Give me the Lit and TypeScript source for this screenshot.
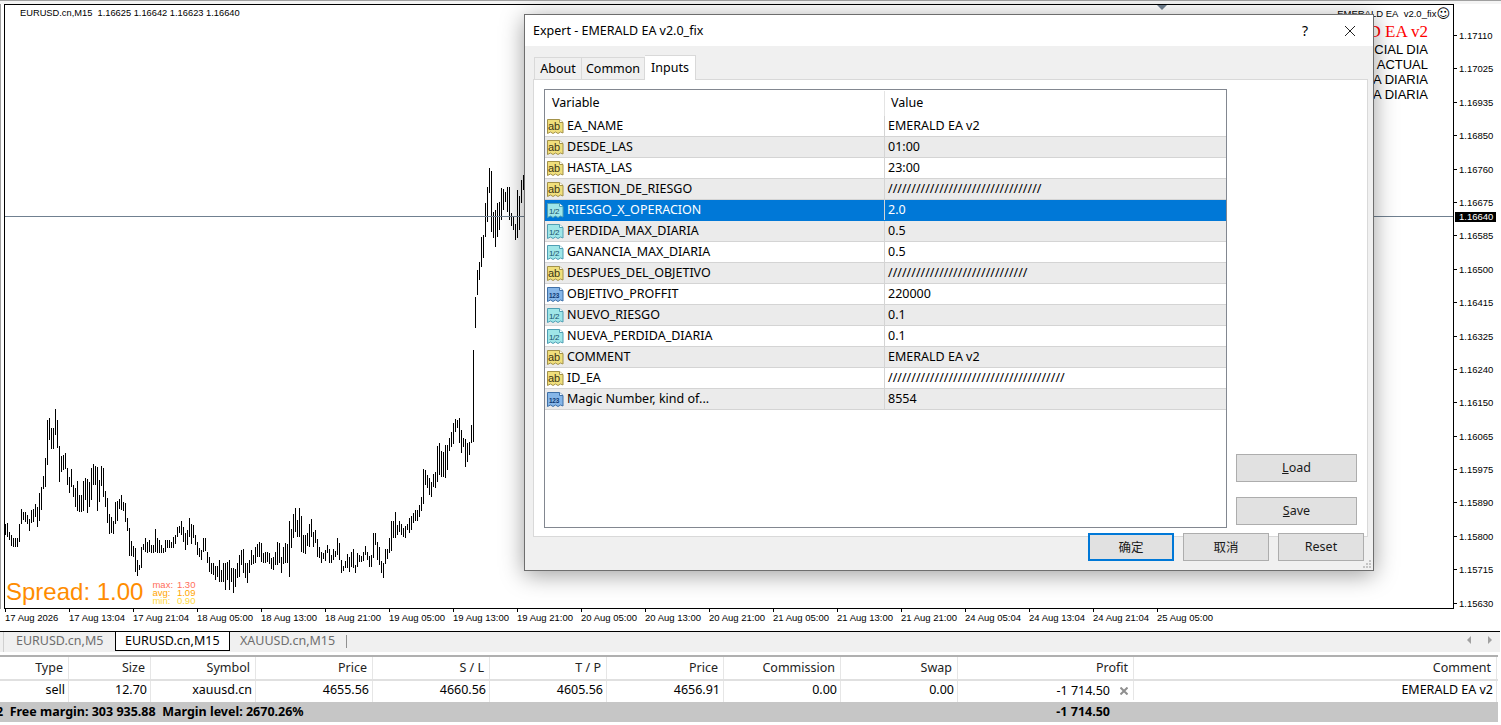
import { LitElement, css, html, svg } from "lit";
import { customElement } from "lit/decorators.js";

type Kind = "ab" | "half" | "num";

const INPUTS: [Kind, string, string][] = [
  ["ab", "EA_NAME", "EMERALD EA v2"],
  ["ab", "DESDE_LAS", "01:00"],
  ["ab", "HASTA_LAS", "23:00"],
  ["ab", "GESTION_DE_RIESGO", "/".repeat(33)],
  ["half", "RIESGO_X_OPERACION", "2.0"],
  ["half", "PERDIDA_MAX_DIARIA", "0.5"],
  ["half", "GANANCIA_MAX_DIARIA", "0.5"],
  ["ab", "DESPUES_DEL_OBJETIVO", "/".repeat(30)],
  ["num", "OBJETIVO_PROFFIT", "220000"],
  ["half", "NUEVO_RIESGO", "0.1"],
  ["half", "NUEVA_PERDIDA_DIARIA", "0.1"],
  ["ab", "COMMENT", "EMERALD EA v2"],
  ["ab", "ID_EA", "/".repeat(38)],
  ["num", "Magic Number, kind of...", "8554"],
];

const ICON_COLORS: Record<Kind, { fill: string; edge: string; ink: string; label: string }> = {
  ab: { fill: "#f0df7c", edge: "#a3924a", ink: "#3c3614", label: "ab" },
  half: { fill: "#9fe6e8", edge: "#4f9fb4", ink: "#14506a", label: "1/2" },
  num: { fill: "#86b6e8", edge: "#3f70a8", ink: "#0f3a74", label: "123" },
};

const PRICES = [
  "1.17110", "1.17025", "1.16935", "1.16850", "1.16760", "1.16675",
  "1.16585", "1.16500", "1.16415", "1.16325", "1.16240", "1.16150",
  "1.16065", "1.15975", "1.15890", "1.15800", "1.15715", "1.15630",
];

const TIMES = [
  "17 Aug 2026", "17 Aug 13:04", "17 Aug 21:04", "18 Aug 05:00", "18 Aug 13:00",
  "18 Aug 21:00", "19 Aug 05:00", "19 Aug 13:00", "19 Aug 21:00", "20 Aug 05:00",
  "20 Aug 13:00", "20 Aug 21:00", "21 Aug 05:00", "21 Aug 13:00", "21 Aug 21:00",
  "24 Aug 05:04", "24 Aug 13:04", "24 Aug 21:04", "25 Aug 05:00",
];

const HEADERS = ["Type", "Size", "Symbol", "Price", "S / L", "T / P", "Price", "Commission", "Swap", "Profit", "Comment"];
const ORDER = ["sell", "12.70", "xauusd.cn", "4655.56", "4660.56", "4605.56", "4656.91", "0.00", "0.00"];

// bar tops and bottoms, read off 3x crops: y = 400 + v / 3, one bar every 2px from x = 5
const BARS_A = [
  372,405, 370,412, 395,420, 405,438, 415,440, 415,440, 413,440, 373,425, 328,372, 335,360,
  337,365, 345,372, 358,392, 330,368, 327,365, 313,352, 322,380, 280,362, 260,330, 228,268,
  175,262, 60,195, 55,120, 85,147, 85,147, 28,105, 60,145, 138,245, 168,215, 165,210,
  160,208, 205,255, 230,278, 208,260, 255,292, 265,320, 243,332, 285,335, 285,335, 242,332,
  235,300, 238,338, 245,320, 205,300, 192,255, 198,255, 200,332, 240,305, 198,258, 205,292,
  272,320, 295,370, 342,402, 350,398, 362,402, 305,372, 302,362, 298,328, 285,330, 305,332,
  308,365, 355,392, 385,467, 422,467, 437,470, 445,515, 480,527, 495,510, 440,505, 432,450,
  415,457, 425,458, 420,455, 435,458, 435,458, 388,455, 415,458, 420,458, 435,458, 445,458,
  420,455, 420,445, 420,445, 425,445, 410,445, 405,432, 380,410, 378,400, 362,405, 380,425,
  400,450, 390,435, 355,410, 372,432, 375,415, 405,435, 425,465, 445,470, 450,480, 415,455,
  415,452, 455,490, 470,515, 488,522, 490,525, 498,540, 498,532, 480,545, 510,545, 490,545,
  490,570, 485,540, 480,570, 505,545, 505,578, 508,562, 490,535, 465,530, 450,495, 448,518,
  490,535, 488,548, 480,520, 450,495, 465,492, 440,490, 432,470, 425,470,
  430,485, 460,490, 456,488, 456,485, 460,492, 475,507, 470,510, 455,495, 427,495, 430,490,
  470,518, 440,492, 428,490, 432,490, 362,530, 388,445, 342,415, 325,397, 360,412, 325,410,
  348,455, 405,460, 405,462, 400,438, 372,440, 358,412, 395,440, 390,430, 418,472, 442,475,
  455,488, 458,478, 450,482, 436,458, 448,488, 465,490, 448,480, 452,470, 415,465, 428,480,
  480,520, 498,512, 483,505, 462,505, 470,515, 456,500, 448,505, 495,518, 460,502, 465,485,
  468,485, 456,482, 438,465, 455,480, 468,500, 465,500, 400,475, 400,435, 425,480, 440,495,
  482,520, 490,535, 447,492, 448,478, 415,460, 362,452, 362,415, 337,415, 375,405, 362,395,
  372,405, 385,410, 378,415, 372,390, 355,398, 348,390, 340,370, 330,362, 330,362, 315,352,
  290,332, 208,312, 210,255, 225,265, 235,285, 245,290, 222,262, 215,265, 138,245, 130,225,
  152,230, 155,232, 135,235, 135,210, 115,152, 97,140, 70,132, 57,95, 60,85, 55,128,
  90,160, 115,140, 118,200, 130,185, 125,165, 75,128, -150,125,
];

// the steep part above y = 400, same order, already in page pixels, from x = 475
const BARS_B = [
  297,328, 270,295, 262,280, 237,267, 235,258, 203,237, 187,222, 168,193, 171,232, 212,238,
  210,247, 203,237, 202,230, 188,220, 189,210, 192,202, 187,212, 187,220, 213,226, 216,230,
  224,240, 190,238, 196,230, 180,203, 175,190,
];

function barsPath(): string {
  let d = "";
  for (let i = 0; i < BARS_A.length; i += 2) {
    const x = 5 + i + 0.5;
    d += `M${x} ${Math.round(400 + BARS_A[i] / 3)}V${Math.round(400 + BARS_A[i + 1] / 3)}`;
  }
  for (let i = 0; i < BARS_B.length; i += 2) {
    const x = 475 + i + 0.5;
    d += `M${x} ${BARS_B[i]}V${BARS_B[i + 1]}`;
  }
  return d;
}

function typeIcon(kind: Kind) {
  const c = ICON_COLORS[kind];
  const size = kind === "num" ? 6.5 : kind === "half" ? 8 : 11;
  return html`<svg class="type-icon" width="17" height="17" viewBox="0 0 17 17">
    <path d="M0.5 1.5H12.5L16 4.5V15L13.5 14 11 15.5 8.5 14 6 15.5 3.5 14 0.5 15.5Z"
      fill=${c.fill} stroke=${c.edge} />
    <path d="M12.5 1.5V4.5H16" fill="#fff" stroke=${c.edge} />
    ${svg`<text x="7" y="11.5" text-anchor="middle" font-family="Liberation Sans, sans-serif"
      font-size=${size} font-weight=${kind === "num" ? 700 : 400} letter-spacing=${kind === "ab" ? 0 : -0.3}
      fill=${c.ink}>${c.label}</text>`}
  </svg>`;
}

@customElement("app-root")
export class AppRoot extends LitElement {
  private renderChart() {
    return html`
      <div class="chart-row">
        <div class="plot">
          <svg class="bars" width="1448" height="603" viewBox="5 5 1448 603">
            <path d=${barsPath()} stroke="#000" stroke-width="1" fill="none" shape-rendering="crispEdges" />
            <path d="M5 216.5H1453" stroke="#708090" stroke-width="1" shape-rendering="crispEdges" />
            <path d="M1157 5H1167L1162 10Z" fill="#708090" />
          </svg>
          <div class="quote">EURUSD.cn,M15&nbsp; 1.16625 1.16642 1.16623 1.16640</div>
          <div class="ea-panel">
            <div class="ea-title">EMERALD EA&nbsp; v2.0_fix<span class="smiley">☺</span></div>
            <div class="ea-name">EMERALD EA v2</div>
            <div class="ea-line">BALANCE INICIAL DIA</div>
            <div class="ea-line">BALANCE ACTUAL</div>
            <div class="ea-line">PERDIDA DIARIA</div>
            <div class="ea-line">GANANCIA DIARIA</div>
          </div>
          <div class="spread">
            <span class="spread-main">Spread: 1.00</span>
            <div class="spread-stats">
              <div class="stat max"><span>max:</span><span>1.30</span></div>
              <div class="stat avg"><span>avg:</span><span>1.09</span></div>
              <div class="stat min"><span>min:</span><span>0.90</span></div>
            </div>
          </div>
        </div>
        <div class="price-axis">
          ${PRICES.map((p) => html`<div class="price">${p}</div>`)}
          <div class="price-now">1.16640</div>
        </div>
      </div>
      <div class="time-axis">
        ${TIMES.map((t) => html`<div class="time">${t}</div>`)}
      </div>
    `;
  }

  private renderTabs() {
    return html`
      <div class="chart-tabs">
        <div class="chart-tab first">EURUSD.cn,M5</div>
        <div class="chart-tab active">EURUSD.cn,M15</div>
        <div class="chart-tab last">XAUUSD.cn,M15</div>
        <div class="tab-arrows">
          <svg width="30" height="10" viewBox="0 0 30 10">
            <path d="M5 1V9L1 5Z" fill="#a0a0a0" />
            <path d="M22 1V9L26 5Z" fill="#a0a0a0" />
          </svg>
        </div>
      </div>
    `;
  }

  private renderTrades() {
    return html`
      <div class="trades">
        <div class="grid head">
          ${HEADERS.map((h) => html`<div class="cell">${h}</div>`)}
        </div>
        <div class="grid order">
          ${ORDER.map((v) => html`<div class="cell">${v}</div>`)}
          <div class="cell profit">
            <span>-1 714.50</span>
            <svg width="8" height="8" viewBox="0 0 8 8">
              <path d="M0.5 0.5L7.5 7.5M7.5 0.5L0.5 7.5" stroke="#8f8f8f" stroke-width="2" fill="none" />
            </svg>
          </div>
          <div class="cell">EMERALD EA v2</div>
        </div>
        <div class="grid status">
          <div class="status-left"><span class="cut">2</span>&nbsp; Free margin: 303 935.88&nbsp; Margin level: 2670.26%</div>
          <div class="status-profit">-1 714.50</div>
        </div>
      </div>
    `;
  }

  private renderDialog() {
    return html`
      <div class="dialog">
        <div class="title-bar">
          <span class="title">Expert - EMERALD EA v2.0_fix</span>
          <span class="help">?</span>
          <svg class="close" width="12" height="12" viewBox="0 0 12 12">
            <path d="M1 1L11 11M11 1L1 11" stroke="#222" stroke-width="1" fill="none" />
          </svg>
        </div>
        <div class="dialog-body">
          <div class="dlg-tabs">
            <div class="dlg-tab about">About</div>
            <div class="dlg-tab common">Common</div>
            <div class="dlg-tab on">Inputs</div>
          </div>
          <div class="panel">
            <div class="list">
              <div class="list-head">
                <div class="col-var">Variable</div>
                <div class="col-val">Value</div>
              </div>
              ${INPUTS.map(([kind, name, value], i) => html`
                <div class="list-row ${i === 4 ? "sel" : i % 2 === 1 || i === 5 ? "alt" : ""}">
                  <div class="col-name">${typeIcon(kind)}<span>${name}</span></div>
                  <div class="col-value">${value}</div>
                </div>
              `)}
            </div>
            <div class="side-btns">
              <button class="btn side"><u>L</u>oad</button>
              <button class="btn side"><u>S</u>ave</button>
            </div>
          </div>
          <div class="dlg-btns">
            <button class="btn main default">确定</button>
            <button class="btn main">取消</button>
            <button class="btn main">Reset</button>
          </div>
        </div>
        <svg class="grip" width="10" height="10" viewBox="0 0 10 10">
          <path d="M7 1h2v2h-2zM4 4h2v2h-2zM7 4h2v2h-2zM1 7h2v2h-2zM4 7h2v2h-2zM7 7h2v2h-2z" fill="#c4c4c4" />
        </svg>
      </div>
    `;
  }

  render() {
    return html`
      <div class="strip"></div>
      ${this.renderChart()} ${this.renderTabs()} ${this.renderTrades()} ${this.renderDialog()}
    `;
  }

  static styles = css`
    :host {
      display: block;
      position: relative;
      width: 1501px;
      height: 725px;
      overflow: hidden;
      background: #fff;
      color: #000;
      font-family: "Noto Sans", "Noto Sans CJK SC", sans-serif;
      font-size: 12.5px;
    }

    .strip {
      height: 4px;
      box-sizing: border-box;
      border-top: 1px solid #a0a0a0;
      background: #f4f4f4;
    }

    .chart-row {
      display: flex;
      height: 605px;
      border-left: 1px solid #a0a0a0;
      padding-left: 3px;
    }

    .plot {
      position: relative;
      box-sizing: border-box;
      width: 1450px;
      height: 605px;
      border: 1px solid #000;
      overflow: hidden;
    }

    .bars {
      position: absolute;
      left: 0;
      top: 0;
    }

    .quote {
      position: absolute;
      left: 15px;
      top: 1px;
      font: 9.3px/14px "Liberation Sans", sans-serif;
      white-space: nowrap;
    }

    .ea-panel {
      position: absolute;
      right: 3px;
      top: 2px;
      display: flex;
      flex-direction: column;
      align-items: flex-end;
      white-space: nowrap;
    }

    .ea-title {
      font: 9.5px/14px "Liberation Sans", sans-serif;
      display: flex;
      align-items: center;
    }

    .smiley {
      font: 13px/14px "DejaVu Sans", sans-serif;
    }

    .ea-name {
      font: 17px/21px "Liberation Serif", serif;
      color: #f00;
      margin-right: 22px;
    }

    .ea-line {
      font: 13px/15px "Liberation Sans", sans-serif;
      margin-right: 22px;
    }

    .spread {
      position: absolute;
      left: 1px;
      bottom: 1px;
      display: flex;
      align-items: center;
      gap: 9px;
    }

    .spread-main {
      font: 24px/30px "Liberation Sans", sans-serif;
      color: #ff8c00;
    }

    .spread-stats {
      font: 9.5px/8px "Liberation Sans", sans-serif;
      width: 43px;
      padding-top: 1px;
    }

    .stat {
      display: flex;
      justify-content: space-between;
    }

    .stat.max {
      color: #ff6e5a;
    }

    .stat.avg {
      color: #ffa500;
    }

    .stat.min {
      color: #ffd840;
    }

    .price-axis {
      position: relative;
      flex: 1;
      padding-top: 15px;
    }

    .price {
      position: relative;
      height: 33.4px;
      padding-left: 5px;
      font: 9.5px/33.4px "Liberation Sans", sans-serif;
    }

    .price::before {
      content: "";
      position: absolute;
      left: 0;
      top: 16px;
      width: 3px;
      height: 1px;
      background: #000;
    }

    .price-now {
      position: absolute;
      left: 1px;
      top: 208px;
      width: 41px;
      height: 10px;
      padding-left: 4px;
      box-sizing: border-box;
      background: #000;
      color: #fff;
      font: 9.5px/10px "Liberation Sans", sans-serif;
    }

    .time-axis {
      display: flex;
      height: 22px;
      padding-left: 5px;
    }

    .time {
      position: relative;
      width: 64px;
      flex: none;
      font: 9.5px/17px "Liberation Sans", sans-serif;
      white-space: nowrap;
    }

    .time::before {
      content: "";
      position: absolute;
      left: 0;
      top: 0;
      width: 1px;
      height: 3px;
      background: #000;
    }

    .chart-tabs {
      display: flex;
      height: 20px;
      border-top: 1px solid #000;
      background: #f0f0f0;
      margin-right: 1px;
      padding-left: 3px;
      font-size: 12.5px;
      line-height: 18px;
    }

    .chart-tab {
      box-sizing: border-box;
      color: #6d6d6d;
      white-space: nowrap;
    }

    .chart-tab.first {
      width: 112px;
      padding-left: 12px;
      border-left: 1px solid #d0d0d0;
    }

    .chart-tab.active {
      width: 115px;
      padding-left: 9px;
      height: 19px;
      background: #fff;
      color: #000;
      border: 1px solid #000;
      border-top: none;
    }

    .chart-tab.last {
      width: 117px;
      padding-left: 10px;
      position: relative;
    }

    .chart-tab.last::after {
      content: "";
      position: absolute;
      right: 0;
      top: 3px;
      width: 1px;
      height: 13px;
      background: #909090;
    }

    .tab-arrows {
      margin-left: auto;
      padding: 3px 4px 0 0;
    }

    .tab-arrows svg {
      display: block;
    }

    .trades {
      margin-top: 3px;
      width: 1498px;
    }

    .grid {
      display: grid;
      grid-template-columns: 69px 82px 105px repeat(6, 117px) 176px 363px;
    }

    .cell {
      box-sizing: border-box;
      text-align: right;
      white-space: nowrap;
      border-right: 1px solid #e6e6e6;
    }

    .head {
      height: 26px;
      border-top: 2px solid #b0b0b0;
      border-bottom: 2px solid #e0e0e0;
      box-sizing: border-box;
      line-height: 21px;
      color: #222;
    }

    .head .cell {
      padding-right: 5px;
    }

    .order {
      height: 21px;
      line-height: 18px;
    }

    .order .cell {
      padding-right: 3px;
    }

    .order .cell.profit {
      display: flex;
      justify-content: flex-end;
      align-items: center;
      gap: 10px;
      height: 19px;
      padding-right: 5px;
    }

    .status {
      height: 20px;
      background: #c6c6c6;
      font-weight: 700;
      line-height: 19px;
      white-space: nowrap;
    }

    .status-left {
      grid-column: 1 / 10;
      overflow: hidden;
    }

    .cut {
      margin-left: -4px;
    }

    .status-profit {
      text-align: right;
      padding-right: 24px;
    }

    .dialog {
      position: absolute;
      left: 524px;
      top: 14px;
      width: 850px;
      height: 557px;
      box-sizing: border-box;
      border: 1px solid #6e6e6e;
      background: #f0f0f0;
      box-shadow: 0 4px 22px rgba(0, 0, 0, 0.38);
      display: flex;
      flex-direction: column;
    }

    .title-bar {
      flex: none;
      height: 31px;
      background: #fff;
      display: flex;
      align-items: center;
      padding-left: 8px;
    }

    .title {
      flex: 1;
    }

    .help {
      margin-right: 36px;
      font-size: 14px;
    }

    .close {
      margin-right: 17px;
    }

    .dialog-body {
      flex: 1;
      display: flex;
      flex-direction: column;
      padding: 9px 6px 0 8px;
    }

    .dlg-tabs {
      display: flex;
      height: 24px;
      align-items: flex-end;
      padding-left: 1px;
    }

    .dlg-tab {
      box-sizing: border-box;
      height: 22px;
      line-height: 21px;
      text-align: center;
      border: 1px solid #d9d9d9;
      border-bottom: none;
      border-left-width: 0;
      background: #f0f0f0;
    }

    .dlg-tab.about {
      width: 48px;
      border-left-width: 1px;
    }

    .dlg-tab.common {
      width: 63px;
    }

    .dlg-tab.on {
      width: 51px;
      height: 25px;
      line-height: 23px;
      background: #fff;
      margin-bottom: -1px;
      position: relative;
    }

    .panel {
      box-sizing: border-box;
      height: 458px;
      width: 835px;
      background: #fff;
      border: 1px solid #d9d9d9;
      padding: 9px 10px;
      display: flex;
      gap: 9px;
    }

    .list {
      box-sizing: border-box;
      width: 683px;
      height: 439px;
      border: 1px solid #828790;
      padding-top: 1px;
      overflow: hidden;
    }

    .list-head {
      display: flex;
      height: 25px;
      line-height: 23px;
    }

    .col-var {
      width: 340px;
      padding-left: 7px;
      box-sizing: border-box;
      border-right: 1px solid #e4e4e4;
    }

    .col-val {
      padding-left: 6px;
    }

    .list-row {
      display: flex;
      height: 21px;
      box-sizing: border-box;
      border-bottom: 1px solid #d4d4d4;
      line-height: 20px;
      white-space: nowrap;
    }

    .list-row.alt {
      background: #ebebeb;
    }

    .list-row.sel {
      background: #0078d7;
      color: #fff;
      border-bottom-color: #0078d7;
    }

    .col-name {
      box-sizing: border-box;
      width: 340px;
      display: flex;
      align-items: center;
      gap: 3px;
      padding-left: 2px;
      border-right: 1px solid #d4d4d4;
    }

    .col-value {
      padding-left: 3px;
    }

    .type-icon {
      flex: none;
    }

    .side-btns {
      flex: 1;
      display: flex;
      flex-direction: column;
      justify-content: flex-end;
      gap: 15px;
      padding-bottom: 2px;
    }

    .btn {
      font: inherit;
      color: #1a1a1a;
      background: #e1e1e1;
      border: 1px solid #adadad;
      padding: 0 0 2px;
      box-sizing: border-box;
      height: 28px;
    }

    .btn.side {
      width: 121px;
    }

    .dlg-btns {
      display: flex;
      justify-content: flex-end;
      gap: 9px;
      margin-top: -4px;
      padding-right: 3px;
    }

    .btn.main {
      width: 86px;
    }

    .btn.default {
      border: 2px solid #0078d7;
    }

    .grip {
      position: absolute;
      right: 1px;
      bottom: 1px;
    }
  `;
}

declare global {
  interface HTMLElementTagNameMap {
    "app-root": AppRoot;
  }
}
